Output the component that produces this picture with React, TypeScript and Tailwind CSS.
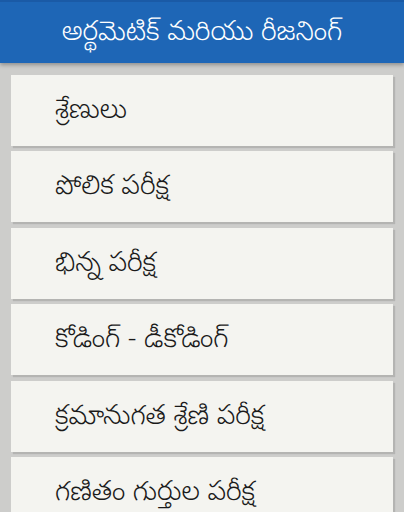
import React from "react";

const items = [
  "శ్రేణులు",
  "పోలిక పరీక్ష",
  "భిన్న పరీక్ష",
  "కోడింగ్ - డీకోడింగ్",
  "క్రమానుగత శ్రేణి పరీక్ష",
  "గణితం గుర్తుల పరీక్ష",
];

export default function App() {
  return (
    <div
      className="w-[404px] h-[512px] overflow-hidden bg-[#cdcdcb] flex flex-col"
      style={{ fontFamily: '"Noto Sans Telugu", "Noto Sans", Roboto, sans-serif' }}
    >
      <div className="relative z-10 h-[63px] shrink-0 bg-[#1e66b6] border-t-[2px] border-[#1a5aa6] flex items-center justify-center pt-[6px] shadow-[0_2px_4px_rgba(0,0,0,0.3)]">
        <span className="text-white text-[27px] leading-none font-light">అర్థమెటిక్ మరియు రీజనింగ్</span>
      </div>
      <div className="flex flex-col gap-[5.4px] pt-[12px] pl-[11px] pr-[11px]">
        {items.map((t) => (
          <div
            key={t}
            className="h-[71px] shrink-0 bg-[#f4f4f0] flex items-center pl-[44px] pt-[6px] shadow-[2px_2px_1px_rgba(0,0,0,0.12)]"
          >
            <span className="text-[#1a1a1a] text-[27px] leading-none font-light">{t}</span>
          </div>
        ))}
      </div>
    </div>
  );
}
